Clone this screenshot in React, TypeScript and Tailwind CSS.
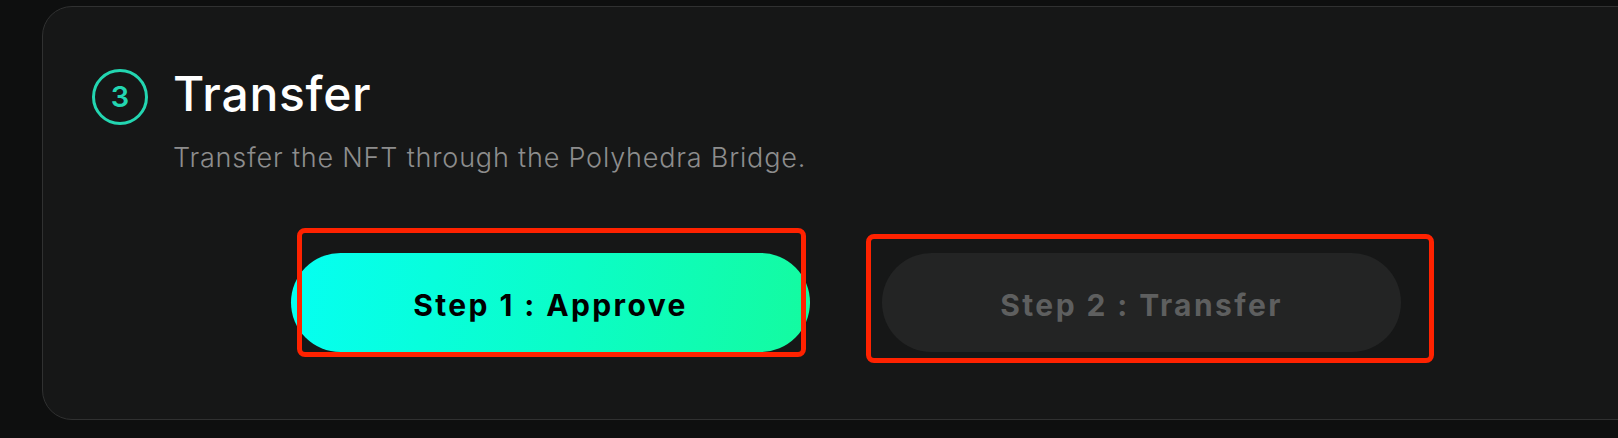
import React from "react";

function StepButton({
  label,
  active,
  mark,
}: {
  label: string;
  active?: boolean;
  mark: string;
}) {
  return (
    <div className="relative">
      <button
        className={
          active
            ? "h-[99px] w-[519px] rounded-full bg-[linear-gradient(100deg,#05fff2_0%,#0bfdc6_55%,#14fb9f_100%)] pt-[6px] text-[30px] font-bold tracking-[0.08em] text-black"
            : "h-[99px] w-[519px] rounded-full bg-[#232424] pt-[6px] text-[30px] font-bold tracking-[0.08em] text-[#5e5f5f]"
        }
      >
        {label}
      </button>
      {/* review markers drawn over the screenshot */}
      <span className={mark} />
    </div>
  );
}

export default function App() {
  return (
    <div
      className="h-[438px] w-[1618px] overflow-hidden bg-[#0e0f0f] pt-[6px]"
      style={{ fontFamily: "Inter, 'Noto Sans', sans-serif" }}
    >
      <section className="ml-[42px] w-[1608px] rounded-[30px] border-[1.5px] border-[#303131] bg-[#161717] pb-[67px] pl-[49px] pt-[62px]">
        <div className="flex items-start gap-[25px]">
          <div className="flex h-[56px] w-[56px] items-center justify-center rounded-full border-[3.5px] border-[#23d6b1] text-[29px] font-semibold text-[#23d6b1]">
            3
          </div>
          <h2 className="mt-[1px] text-[48px] font-medium leading-[48px] tracking-[0.015em] text-white">
            Transfer
          </h2>
        </div>
        <p className="mt-[15px] pl-[81px] text-[27px] font-light leading-[36px] tracking-[0.03em] text-[#8d8d8d]">
          Transfer the NFT through the Polyhedra Bridge.
        </p>
        <div className="-ml-[49px] mt-[77px] flex justify-center gap-[72px]">
          <StepButton
            label="Step 1 : Approve"
            active
            mark="pointer-events-none absolute -top-[25px] bottom-[-5px] left-[6px] right-[4px] rounded-[8px] border-[5px] border-[#ff2200]"
          />
          <StepButton
            label="Step 2 : Transfer"
            mark="pointer-events-none absolute -top-[19px] bottom-[-11px] -left-[16px] -right-[33px] rounded-[8px] border-[5px] border-[#ff2200]"
          />
        </div>
      </section>
    </div>
  );
}
